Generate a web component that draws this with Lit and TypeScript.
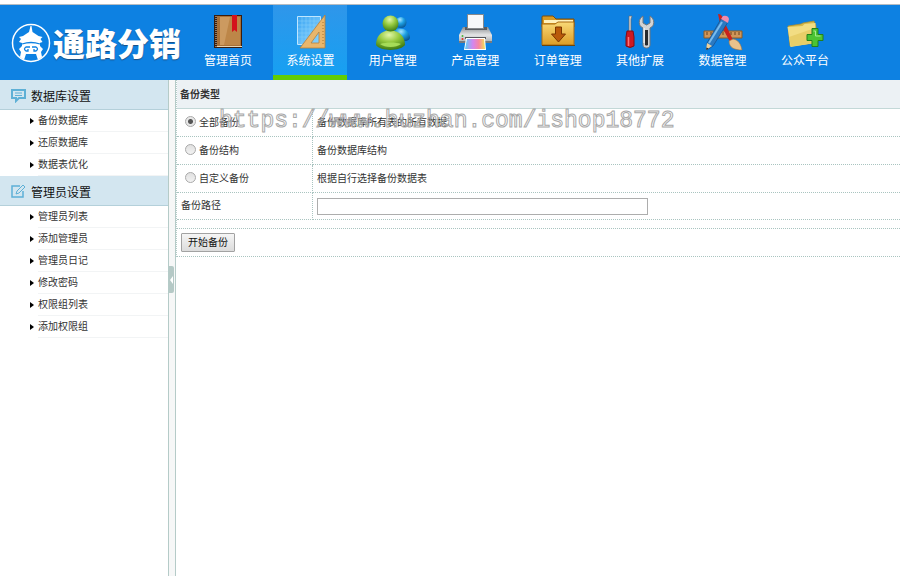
import { LitElement, html, css, svg } from "lit";
import { customElement, property, state } from "lit/decorators.js";
import { classMap } from "lit/directives/class-map.js";

const icons = {
  book: svg`
    <path d="M6 3h28v33H6z" fill="#3a1c0c"/>
    <path d="M9 4h24v30H9z" fill="#a87037"/>
    <path d="M12 5h20v28H12z" fill="#bd8648"/>
    <path d="M12 5h10l-6 28h-4z" fill="#cc9a60"/>
    <path d="M8 4v31" stroke="#a89a88" stroke-width="1.500" stroke-dasharray="1 1"/>
    <path d="M9 34.500h25" stroke="#e6d4b4"/>
    <path d="M24 3h5v17l-2.500-2-2.500 2z" fill="#d4131b"/>`,
  ruler: svg`
    <defs><linearGradient id="sheet" x2="1" y2="1"><stop stop-color="#3ba5f2"/><stop offset="1" stop-color="#8bd4ff"/></linearGradient></defs>
    <path d="M7.500 4.500h23v28h-23z" fill="url(#sheet)" stroke="#bfe6ff"/>
    <path d="M8 9h22M8 13h22M8 17h22M8 21h22M8 25h22M12 5v28M16 5v28M20 5v28M24 5v28" stroke="#8bd0fa" stroke-width=".5"/>
    <path d="M10 36L35 3v33z M21 31h8V20z" fill="#e9b66b" fill-rule="evenodd" stroke="#b98038" stroke-width=".8"/>
    <path d="M33 10v24" stroke="#a87430" stroke-dasharray="1 2"/>`,
  users: svg`
    <defs>
      <radialGradient id="green" cx=".45" cy=".25" r=".8"><stop stop-color="#e2f6a8"/><stop offset=".45" stop-color="#93c93d"/><stop offset="1" stop-color="#34720f"/></radialGradient>
      <radialGradient id="blue" cx=".4" cy=".25" r=".8"><stop stop-color="#a8e6ff"/><stop offset=".45" stop-color="#1ea0e2"/><stop offset="1" stop-color="#06508e"/></radialGradient>
    </defs>
    <path d="M22 17c8-2 14 1 15 8 0 4-5 5-12 4z" fill="url(#blue)"/>
    <circle cx="28" cy="10.500" r="5.500" fill="url(#blue)"/>
    <path d="M3 33c0-8 4-14 14-15 10 1 15 7 15 15-4 6-24 7-29 0z" fill="url(#green)"/>
    <path d="M7 32c5 4 16 4 21 0-5-2-15-2-21 0z" fill="#a6dc58"/>
    <circle cx="17.500" cy="11.500" r="8" fill="url(#green)"/>`,
  printer: svg`
    <defs>
      <linearGradient id="case" x2="0" y2="1"><stop stop-color="#8c8f92"/><stop offset=".5" stop-color="#e4e5e6"/><stop offset="1" stop-color="#a5a8ab"/></linearGradient>
      <linearGradient id="ink"><stop stop-color="#5fd0f4"/><stop offset=".4" stop-color="#d585ee"/><stop offset=".7" stop-color="#f9879d"/><stop offset="1" stop-color="#f4e358"/></linearGradient>
    </defs>
    <path d="M8 15h25l4 8v8H4v-8z" fill="url(#case)"/>
    <path d="M10 15h22v3H10z" fill="#5a5d61"/>
    <path d="M12.500 2.500h16v14h-16z" fill="#f7f8f9" stroke="#85888b"/>
    <path d="M4 29h33v2H4z" fill="#777a7e"/>
    <circle cx="7.500" cy="24" r="1" fill="#4bb135"/><circle cx="7.500" cy="27" r="1" fill="#e43329"/>
    <path d="M10 25h21v2H10z" fill="#55585c"/>
    <path d="M11 26h19l1 12H9z" fill="#fff"/>
    <path d="M12 27h17l1 10H10z" fill="url(#ink)"/>`,
  download: svg`
    <defs><linearGradient id="gold" x2="0" y2="1"><stop stop-color="#f9d977"/><stop offset="1" stop-color="#dc9c25"/></linearGradient></defs>
    <path d="M4 5q0-1 1-1h10l3 3h18v8H4z" fill="#d99a22" stroke="#7b4b0a"/>
    <path d="M6 8h29v3H6z" fill="#fff1bb"/>
    <path d="M4 12h13l3-2h16v23H4z" fill="url(#gold)" stroke="#a96b12"/>
    <path d="M17.500 15h6v7h4l-7 8-7-8h4z" fill="#b9590a" stroke="#7d3700"/>
    <path d="M4 33.500h33" stroke="#6d460a"/>`,
  tools: svg`
    <path d="M9 4h3l-1 3v13h-2V7z" fill="#d2d5d8" stroke="#666" stroke-width=".6"/>
    <path d="M7 19h6l1 6v9q-4 3-8 0v-9z" fill="#ce1823" stroke="#860a14"/>
    <path d="M8.500 25v9" stroke="#ff747b" stroke-width="1.500"/>
    <path d="M23 4c-5 3-5 10 0 12v17c0 4 7 4 7 0V16c5-2 5-9 0-12v7l-3.500 2L23 11z" fill="#d2d4d5" stroke="#72777b"/>
    <path d="M25 18h3v15q-1.500 1-3 0z" fill="#26292d"/>
    <path d="M24 16v15" stroke="#fff"/>`,
  design: svg`
    <path d="M1 19h38v7H1z" fill="#cf9659" stroke="#8a5a26"/>
    <path d="M4 20v3M8 20v3M12 20v3M16 20v3M20 20v3M24 20v3M28 20v3M32 20v3M36 20v3" stroke="#6d431d"/>
    <path d="M15 2q4 0 5 5l10 21-3 2L17 11z" fill="#c9221c"/>
    <path d="M26 29l4-2c6 1 8 6 9 11-7 0-13-2-13-9z" fill="#e9c28c" stroke="#a07543" stroke-width=".6"/>
    <path d="M18 7l7 3L10 34l-6 4 0-7z" fill="#2a79c2" stroke="#174e87" stroke-width=".7"/>
    <path d="M19 10L6 31" stroke="#79bbed" stroke-width="2"/>
    <path d="M18 7l2-3q5-1 6 3l-1 4z" fill="#f08bac"/>
    <path d="M4 31l5 3-6 4z" fill="#edcf9c"/><path d="M3.500 35.500l2 1-2.500 1.500z" fill="#222"/>`,
  folder: svg`
    <path d="M3 14l13-2 2-1 11-2 2 5v17L5 34z" fill="#d6b849" stroke="#ad8b28" stroke-width=".7"/>
    <path d="M2.500 15l15-1 2-2 11-1-1 20-24 4z" fill="#f2dd83"/>
    <path d="M4 25l26-9v15L6 34.500z" fill="#e8ce68"/>
    <path d="M27 16.500h6v6h5v6h-5v6h-6v-6h-5v-6h5z" fill="#4cc333" stroke="#23811a"/>
    <path d="M28.500 19h2v5h5" stroke="#a2ee8d" fill="none"/>`,
};

const NAV = [
  { label: "管理首页", icon: icons.book },
  { label: "系统设置", icon: icons.ruler },
  { label: "用户管理", icon: icons.users },
  { label: "产品管理", icon: icons.printer },
  { label: "订单管理", icon: icons.download },
  { label: "其他扩展", icon: icons.tools },
  { label: "数据管理", icon: icons.design },
  { label: "公众平台", icon: icons.folder },
];

@customElement("top-bar")
class TopBar extends LitElement {
  @state() active = 1;

  static styles = css`
    :host { display: block; padding-top: 4px; }
    .bar {
      display: flex;
      height: 75px;
      border-top: 1px solid #b5bcc2;
      background: #0d81e2;
      color: #fff;
    }
    .brand {
      display: flex;
      align-items: center;
      flex: none;
      gap: 2px;
      width: 180px;
      padding: 0 0 2px 11px;
      margin: 0;
      box-sizing: border-box;
      font: 900 32px/32px "Noto Sans CJK SC", sans-serif;
      white-space: nowrap;
      text-shadow: 0 1px 1px #1b4e80;
    }
    .brand svg { flex: none; width: 40px; height: 40px; margin-top: 2px; }
    nav {
      display: flex;
      justify-content: space-between;
      width: 651px;
      margin-left: 11px;
    }
    a {
      display: flex;
      flex-direction: column;
      align-items: center;
      width: 74px;
      padding-top: 7px;
      box-sizing: border-box;
      border-bottom: 5px solid transparent;
      color: #fff;
      font-size: 12px;
      line-height: 18px;
      text-decoration: none;
      white-space: nowrap;
    }
    a svg { flex: none; width: 40px; height: 40px; }
    .active {
      border-bottom-color: #62cc04;
      background: linear-gradient(#2f96ea, #16a0f2) padding-box;
    }
  `;

  render() {
    return html`
      <header class="bar">
        <h1 class="brand">
          <svg viewBox="0 0 40 40" aria-hidden="true">
            <circle cx="20" cy="20" r="18.500" fill="none" stroke="#fff" stroke-width="1.500"/>
            <path d="M19.500 3h1l1 6 6 4 4 1-2 2 2 3-3 1H11l-3-1 2-3-2-2 4-1 6-4z" fill="#fff"/>
            <path d="M11 18h18v5l3 3-2 3 1 5-4 3-2-6H15l-2 6-4-3 1-5-2-3 3-3z" fill="#fff"/>
            <path d="M11 21q9-3 18 0M19 24h-4q-3 2 0 4h2v-2M21 24h4q3 2 0 4h-2v-2" fill="none" stroke="#0d81e2" stroke-width="1.300"/>
          </svg>
          <span>通路分销</span>
        </h1>
        <nav>
          ${NAV.map((item, i) => html`
            <a href="#" class=${classMap({ active: i === this.active })} @click=${() => (this.active = i)}>
              <svg viewBox="0 0 40 40" aria-hidden="true">${item.icon}</svg>
              <span>${item.label}</span>
            </a>`)}
        </nav>
      </header>
    `;
  }
}

const GROUPS = [
  {
    title: "数据库设置",
    icon: svg`<path d="M1 2h13v8H8l-3 3v-3H1z"/><path d="M4 5h7M4 7.500h7" stroke-width="1"/>`,
    items: ["备份数据库", "还原数据库", "数据表优化"],
  },
  {
    title: "管理员设置",
    icon: svg`<path d="M9 2H1v11h11V7" stroke-width="1.500"/><path d="M5 10l1-3 6-6 2 2-6 6z" stroke-width="1"/>`,
    items: ["管理员列表", "添加管理员", "管理员日记", "修改密码", "权限组列表", "添加权限组"],
  },
];

@customElement("side-menu")
class SideMenu extends LitElement {
  static styles = css`
    :host { display: block; }
    h2 {
      display: flex;
      align-items: center;
      gap: 5px;
      height: 30px;
      padding: 2px 0 0 11px;
      margin: 0;
      box-sizing: border-box;
      border-bottom: 1px solid #b4d0da;
      background: #d3e6f0;
      color: #111;
      font-size: 12px;
      font-weight: 400;
    }
    h2 svg {
      width: 15px;
      height: 15px;
      fill: none;
      stroke: #5eb0d6;
      stroke-width: 2;
    }
    ul { margin: 0; padding: 0; list-style: none; }
    li { display: flex; align-items: center; gap: 4px; padding-left: 30px; }
    li::before {
      content: "";
      border: 3px solid transparent;
      border-left: 4px solid #000;
      border-right: 0;
    }
    a {
      flex: 1;
      height: 22px;
      box-sizing: border-box;
      border-bottom: 1px solid #f2f4f5;
      color: #333;
      font-size: 10px;
      line-height: 22px;
      text-decoration: none;
    }
  `;

  render() {
    return html`
      <nav>
        ${GROUPS.map((group) => html`
          <h2><svg viewBox="0 0 15 15" aria-hidden="true">${group.icon}</svg>${group.title}</h2>
          <ul>${group.items.map((item) => html`<li><a href="#">${item}</a></li>`)}</ul>`)}
      </nav>
    `;
  }
}

const TYPES = [
  { id: "all", label: "全部备份", note: "备份数据库所有表的所有数据" },
  { id: "structure", label: "备份结构", note: "备份数据库结构" },
  { id: "custom", label: "自定义备份", note: "根据自行选择备份数据表" },
];

@customElement("backup-form")
class BackupForm extends LitElement {
  @property() selected = "all";

  static styles = css`
    :host { display: block; position: relative; }
    table {
      width: 100%;
      border-collapse: separate;
      border-spacing: 0;
      table-layout: fixed;
      border-left: 1px dotted #b5cbc8;
      color: #333;
      font-size: 10px;
      line-height: 16px;
    }
    .first { width: 136px; }
    th, td {
      height: 28px;
      padding: 0 4px;
      box-sizing: border-box;
      border-bottom: 1px dotted #a9c4c0;
      text-align: left;
      font-weight: 400;
    }
    thead th {
      height: 29px;
      padding: 2px 3px 0;
      border-bottom: 1px solid #c3d8d7;
      background: #ecf1f4;
      font-weight: 700;
    }
    tbody th { border-right: 1px dotted #a9c4c0; }
    .path > * { height: 27px; }
    .spacer td { height: 9px; padding: 0; }
    .choice { display: flex; align-items: center; gap: 3px; padding-left: 4px; }
    .radio {
      appearance: none;
      width: 11px;
      height: 11px;
      margin: 0 0 2px;
      border: 1px solid #a9a9a9;
      border-radius: 50%;
      background: linear-gradient(#e0e0e0, #f2f2f2);
    }
    .radio:checked { background: radial-gradient(circle, #555 0 2px, #e8e8e8 3px); }
    .field {
      display: block;
      width: 331px;
      max-width: 100%;
      height: 17px;
      padding: 0 2px;
      box-sizing: border-box;
      border: 1px solid #adadad;
      background: #fff;
      font: inherit;
    }
    .start {
      display: block;
      height: 19px;
      padding: 0 6px;
      border: 1px solid #a2a2a2;
      border-radius: 1px;
      background: linear-gradient(#f5f5f5, #dcdcdc);
      color: #111;
      font: inherit;
    }
    .mark {
      position: absolute;
      top: 27px;
      left: 43px;
      color: transparent;
      font: 23px/28px "Liberation Mono", monospace;
      white-space: nowrap;
      pointer-events: none;
      -webkit-text-stroke: 1px #a8a8a8;
    }
  `;

  render() {
    return html`
      <form @submit=${(e: Event) => e.preventDefault()}>
        <table>
          <colgroup><col class="first" /><col /></colgroup>
          <thead><tr><th colspan="2">备份类型</th></tr></thead>
          <tbody>
            ${TYPES.map((type) => html`
              <tr>
                <th scope="row">
                  <label class="choice">
                    <input class="radio" type="radio" name="type" .value=${type.id}
                      .checked=${type.id === this.selected}
                      @change=${() => (this.selected = type.id)} />
                    ${type.label}
                  </label>
                </th>
                <td>${type.note}</td>
              </tr>`)}
            <tr class="path">
              <th scope="row"><label for="path">备份路径</label></th>
              <td><input class="field" id="path" type="text" /></td>
            </tr>
            <tr class="spacer"><td colspan="2"></td></tr>
            <tr><td colspan="2"><button class="start">开始备份</button></td></tr>
          </tbody>
        </table>
      </form>
      <div class="mark">https://www.huzhan.com/ishop18772</div>
    `;
  }
}

@customElement("app-root")
class AppRoot extends LitElement {
  @state() open = true;

  static styles = css`
    :host {
      display: flex;
      flex-direction: column;
      min-height: 100vh;
      background: #fff;
      font-family: "Liberation Sans", "Noto Sans CJK SC", sans-serif;
    }
    .body { display: flex; flex: 1; }
    side-menu { flex: none; width: 168px; }
    .split {
      flex: none;
      width: 8px;
      box-sizing: border-box;
      border: solid #b5cbc8;
      border-width: 0 1px;
      background: #f6f7f7;
    }
    .handle {
      display: flex;
      align-items: center;
      width: 5px;
      height: 27px;
      margin: 186px 0 0;
      padding: 0 0 0 1px;
      border: 0;
      border-radius: 0 2px 2px 0;
      background: #b5c9c6;
    }
    .handle::before {
      content: "";
      border: 4px solid transparent;
      border-right: 3px solid #fff;
      border-left: 0;
    }
    backup-form { flex: 1; min-width: 0; }
  `;

  render() {
    return html`
      <top-bar></top-bar>
      <div class="body">
        ${this.open ? html`<side-menu></side-menu>` : ""}
        <div class="split">
          <button class="handle" aria-label="收起菜单" @click=${() => (this.open = !this.open)}></button>
        </div>
        <backup-form></backup-form>
      </div>
    `;
  }
}
